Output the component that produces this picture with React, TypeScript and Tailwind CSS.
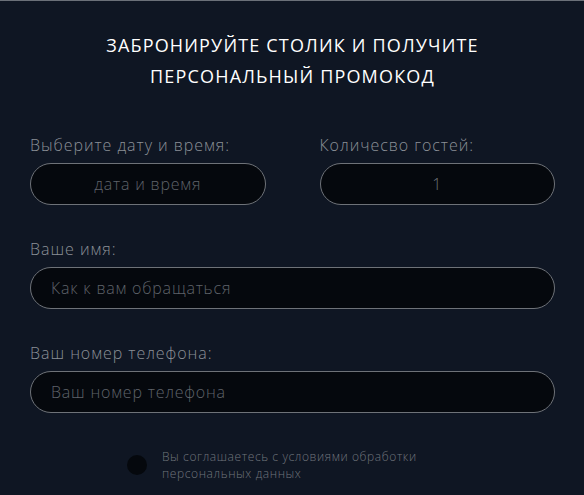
import { useState } from 'react';

const font = { fontFamily: '"Open Sans", "Liberation Sans", sans-serif' };

function Field({ label, placeholder, center, value }: { label: string; placeholder: string; center?: boolean; value?: string }) {
  const [v, setV] = useState(value ?? '');
  return (
    <div className="flex flex-col gap-2">
      <label className="text-[16px] leading-5 font-light text-[#8b9097] tracking-[0.06em]">{label}</label>
      <input
        value={v}
        onChange={(e) => setV(e.target.value)}
        placeholder={placeholder}
        className={
          'h-[42px] w-full rounded-full border border-[#6e7278] bg-[#05080d] px-5 text-[16px] font-light tracking-[0.05em] text-[#6f737a] placeholder:text-[#5f636a] outline-none ' +
          (center ? 'text-center' : 'text-left')
        }
        style={font}
      />
    </div>
  );
}

export default function App() {
  const [agree, setAgree] = useState(false);
  return (
    <div className="min-h-[495px] w-full border-t border-[#6b7078] bg-[#0f1623]" style={font}>
      <div className="px-[30px] pr-[29px] pt-[29px]">
        <h2 className="text-center text-[18px] font-medium uppercase leading-[31px] tracking-[0.065em] text-white">
          Забронируйте столик и получите
          <br />
          персональный промокод
        </h2>

        <div className="mt-[43px] grid grid-cols-2 gap-x-[54px]">
          <Field label="Выберите дату и время:" placeholder="дата и время" center />
          <Field label="Количесво гостей:" placeholder="1" value="1" center />
        </div>

        <div className="mt-[34px]">
          <Field label="Ваше имя:" placeholder="Как к вам обращаться" />
        </div>

        <div className="mt-[34px]">
          <Field label="Ваш номер телефона:" placeholder="Ваш номер телефона" />
        </div>

        <div className="mt-[35px] ml-[97px] flex items-center gap-[15px]">
          <button
            onClick={() => setAgree(!agree)}
            className="h-[20px] w-[20px] shrink-0 rounded-full bg-[#05080d]"
          >
            {agree && <span className="m-auto block h-2 w-2 rounded-full bg-white" />}
          </button>
          <p className="text-[12px] font-light leading-[17px] tracking-[0.05em] text-[#70757c]">
            Вы соглашаетесь с условиями обработки
            <br />
            персональных данных
          </p>
        </div>
      </div>
    </div>
  );
}
